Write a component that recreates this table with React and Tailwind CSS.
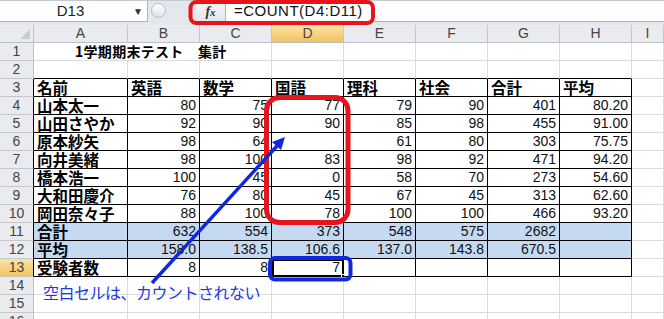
import React from 'react';

const COLS = ['A', 'B', 'C', 'D', 'E', 'F', 'G', 'H', 'I'];

// A..I for rows 1..16
const DATA = {
  3: ['名前', '英語', '数学', '国語', '理科', '社会', '合計', '平均'],
  4: ['山本太一', '80', '75', '77', '79', '90', '401', '80.20'],
  5: ['山田さやか', '92', '90', '90', '85', '98', '455', '91.00'],
  6: ['原本紗矢', '98', '64', '', '61', '80', '303', '75.75'],
  7: ['向井美緒', '98', '100', '83', '98', '92', '471', '94.20'],
  8: ['橋本浩一', '100', '45', '0', '58', '70', '273', '54.60'],
  9: ['大和田慶介', '76', '80', '45', '67', '45', '313', '62.60'],
  10: ['岡田奈々子', '88', '100', '78', '100', '100', '466', '93.20'],
  11: ['合計', '632', '554', '373', '548', '575', '2682', ''],
  12: ['平均', '158.0', '138.5', '106.6', '137.0', '143.8', '670.5', ''],
  13: ['受験者数', '8', '8', '7', '', '', '', ''],
};

const inTable = (r, c) => r >= 3 && r <= 13 && c >= 0 && c <= 7;

function Cell({ r, c }) {
  const v = (DATA[r] && DATA[r][c]) || '';
  const rightBlack = inTable(r, c) || inTable(r, c + 1);
  const bottomBlack = inTable(r, c) || inTable(r + 1, c);
  const hidden = r === 1 && (c === 0 || c === 1);
  const filled = (r === 11 || r === 12) && c <= 7;
  const isText = c === 0 || r === 3;
  return (
    <div
      className={
        'relative h-[18px] border-r border-b flex items-center whitespace-nowrap leading-[17px] ' +
        (hidden ? 'border-r-white ' : rightBlack ? 'border-r-black ' : 'border-r-[#dadcdd] ') +
        (bottomBlack ? 'border-b-black ' : 'border-b-[#dadcdd] ') +
        (filled ? 'bg-[#c5d9f1] ' : 'bg-white ') +
        (isText
          ? "justify-start pl-[3px] font-bold text-[15.5px] font-['Noto_Sans_CJK_JP',sans-serif] text-black"
          : "justify-end pr-[3px] text-[14px] font-['Liberation_Sans',sans-serif] text-[#111]")
      }
    >
      {r === 1 && c === 0 && (
        <span className="absolute left-[41px] top-0 h-[17px] flex items-center z-10 font-bold text-[14px] leading-[17px] tracking-[0.3px] font-['Noto_Sans_CJK_JP',sans-serif] text-black">
          1学期期末テスト　集計
        </span>
      )}
      {r === 13 && c === 3 && (
        <div className="absolute left-0 top-0 right-[-1px] bottom-[-1px] border-2 border-black">
          <div className="absolute right-[-4px] bottom-[-4px] w-[5px] h-[5px] bg-black border border-white" />
        </div>
      )}
      {v}
    </div>
  );
}

function RowHeader({ r }) {
  const active = r === 13;
  return (
    <div
      className={
        "h-[18px] border-r border-b border-b-[#c4c8ce] flex items-center justify-center leading-[17px] text-[14px] font-['Liberation_Sans',sans-serif] text-[#444] " +
        (inTable(r, 0) ? 'border-r-black ' : 'border-r-[#b9c0c9] ') +
        (active ? 'bg-linear-to-b from-[#fae3a6] to-[#f2c35f]' : 'bg-[#e9ebee]')
      }
    >
      {r}
    </div>
  );
}

export default function App() {
  const rows = Array.from({ length: 16 }, (_, i) => i + 1);
  return (
    <div className="relative w-[664px] h-[319px] overflow-hidden bg-white font-['Liberation_Sans',sans-serif]">
      {/* formula bar */}
      <div className="h-[25px] flex bg-[#e4e8ed] border-t border-[#c3cad3]">
        <div className="w-[148px] h-[21px] bg-white border-r border-b border-[#aab3bf] flex items-center">
          <span className="flex-1 text-center text-[15px] text-[#222] pl-[8px]">D13</span>
          <span className="w-[14px] text-[10px] text-[#333]">▼</span>
        </div>
        <div className="w-[48px] flex items-start pt-[2px] pl-[3px]">
          <div className="w-[15px] h-[15px] rounded-full border border-[#b5bcc6] bg-linear-to-b from-white to-[#dfe3e8]" />
        </div>
        <div className="w-[30px] h-[21px] flex items-center justify-center border-r border-b border-[#aab3bf] bg-linear-to-b from-[#f6f7f9] to-[#e2e6eb]">
          <span className="font-['Liberation_Serif',serif] italic font-bold text-[14px] text-[#333]">
            f<span className="text-[11px]">x</span>
          </span>
        </div>
        <div className="flex-1 h-[21px] bg-white border-b border-[#aab3bf] flex items-center pl-[8px] text-[15px] text-[#111] tracking-[0.5px]">
          =COUNT(D4:D11)
        </div>
      </div>

      {/* sheet */}
      <div className="grid grid-cols-[34px_94px_72px_72px_72px_72px_72px_72px_72px_1fr]">
        <div className="h-[18px] bg-[#e9ebee] border-r border-b border-[#b9c0c9] relative">
          <div className="absolute right-[3px] bottom-[3px] w-0 h-0 border-l-[10px] border-l-transparent border-b-[10px] border-b-[#c7ccd3]" />
        </div>
        {COLS.map((col) => (
          <div
            key={col}
            className={
              'h-[18px] border-r border-b border-r-[#c4c8ce] border-b-[#b9c0c9] flex items-center justify-center leading-[17px] text-[14px] text-[#444] ' +
              (col === 'D' ? 'bg-linear-to-b from-[#fae3a6] to-[#f2c35f]' : 'bg-[#e9ebee]')
            }
          >
            {col}
          </div>
        ))}
        {rows.map((r) => (
          <React.Fragment key={r}>
            <RowHeader r={r} />
            {COLS.map((col, c) => (
              <Cell key={col} r={r} c={c} />
            ))}
          </React.Fragment>
        ))}
      </div>

      {/* annotations */}
      <svg className="absolute left-0 top-0 pointer-events-none" width="664" height="319" viewBox="0 0 664 319">
        <rect x="190.5" y="2" width="182.5" height="21" rx="6" fill="none" stroke="#e8141c" strokeWidth="4" />
        <rect x="266.5" y="97.5" width="81.5" height="125" rx="13" fill="none" stroke="#e8141c" strokeWidth="5" />
        <rect x="270" y="258" width="80.5" height="21.5" rx="5" fill="none" stroke="#1027e0" strokeWidth="4" />
        <line x1="152" y1="283" x2="277" y2="146" stroke="#1027e0" strokeWidth="3.5" />
        <polygon points="285,137 281,150 272,142" fill="#1027e0" />
      </svg>
      <div className="absolute left-[43px] top-[282px] text-[16px] leading-[20px] text-[#1d39e0] font-['Noto_Sans_CJK_JP',sans-serif] tracking-[-0.5px]">
        空白セルは、カウントされない
      </div>
    </div>
  );
}
